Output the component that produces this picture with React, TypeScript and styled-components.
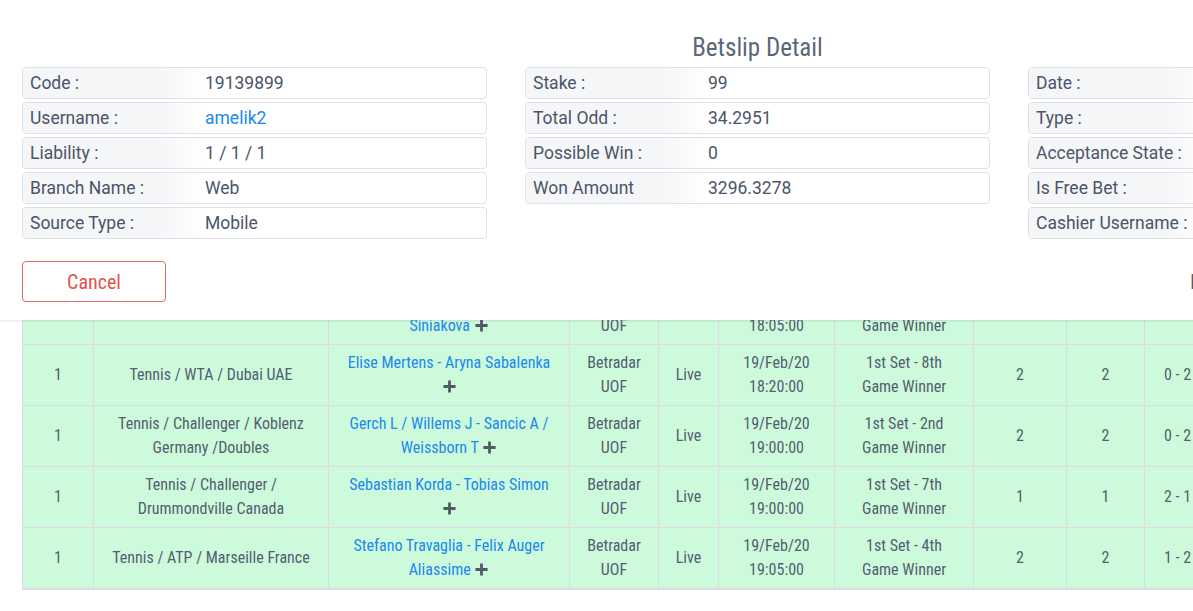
import { useLayoutEffect, useRef } from 'react';
import styled, { createGlobalStyle } from 'styled-components';

const colors = {
	text: '#535e71',
	label: '#4b5569',
	blue: '#2088ee',
	border: '#dfe1e7',
	cellBorder: '#dcdbe5',
	green: '#ccfadb',
	red: '#e2524b',
};

const condensed = `'Roboto Condensed', 'Liberation Sans Narrow', 'DejaVu Sans Condensed', Roboto, sans-serif`;

const GlobalStyle = createGlobalStyle`
	html, body {
		margin: 0;
		padding: 0;
		background: #fff;
	}
	body {
		font-family: Roboto, 'Liberation Sans', sans-serif;
	}
`;

type Field = { label: string; value?: string; link?: boolean };

const fieldColumns: Field[][] = [
	[
		{ label: 'Code :', value: '19139899' },
		{ label: 'Username :', value: 'amelik2', link: true },
		{ label: 'Liability :', value: '1 / 1 / 1' },
		{ label: 'Branch Name :', value: 'Web' },
		{ label: 'Source Type :', value: 'Mobile' },
	],
	[
		{ label: 'Stake :', value: '99' },
		{ label: 'Total Odd :', value: '34.2951' },
		{ label: 'Possible Win :', value: '0' },
		{ label: 'Won Amount', value: '3296.3278' },
	],
	[
		{ label: 'Date :', value: '19/Feb/20 17:58:41' },
		{ label: 'Type :', value: 'Multiple' },
		{ label: 'Acceptance State :', value: 'Accepted' },
		{ label: 'Is Free Bet :', value: 'No' },
		{ label: 'Cashier Username :', value: '-' },
	],
];

type Bet = {
	count: string;
	league: string;
	match: string;
	provider: string;
	state: string;
	date: string;
	time: string;
	market: string;
	odd: string;
	pick: string;
	score: string;
};

const bets: Bet[] = [
	{
		count: '1',
		league: 'Tennis / WTA / Dubai UAE',
		match: 'Barbora Krejcikova - Katerina Siniakova',
		provider: 'Betradar UOF',
		state: 'Live',
		date: '19/Feb/20',
		time: '18:05:00',
		market: '1st Set - 6th Game Winner',
		odd: '2',
		pick: '2',
		score: '1 - 2',
	},
	{
		count: '1',
		league: 'Tennis / WTA / Dubai UAE',
		match: 'Elise Mertens - Aryna Sabalenka',
		provider: 'Betradar UOF',
		state: 'Live',
		date: '19/Feb/20',
		time: '18:20:00',
		market: '1st Set - 8th Game Winner',
		odd: '2',
		pick: '2',
		score: '0 - 2',
	},
	{
		count: '1',
		league: 'Tennis / Challenger / Koblenz Germany /Doubles',
		match: 'Gerch L / Willems J - Sancic A / Weissborn T',
		provider: 'Betradar UOF',
		state: 'Live',
		date: '19/Feb/20',
		time: '19:00:00',
		market: '1st Set - 2nd Game Winner',
		odd: '2',
		pick: '2',
		score: '0 - 2',
	},
	{
		count: '1',
		league: 'Tennis / Challenger / Drummondville Canada',
		match: 'Sebastian Korda - Tobias Simon',
		provider: 'Betradar UOF',
		state: 'Live',
		date: '19/Feb/20',
		time: '19:00:00',
		market: '1st Set - 7th Game Winner',
		odd: '1',
		pick: '1',
		score: '2 - 1',
	},
	{
		count: '1',
		league: 'Tennis / ATP / Marseille France',
		match: 'Stefano Travaglia - Felix Auger Aliassime',
		provider: 'Betradar UOF',
		state: 'Live',
		date: '19/Feb/20',
		time: '19:05:00',
		market: '1st Set - 4th Game Winner',
		odd: '2',
		pick: '2',
		score: '1 - 2',
	},
];

const columnWidths = [71, 235, 241, 89, 60, 116, 139, 93, 78, 66, 110];

const PlusIcon = () => (
	<Plus viewBox="0 0 16 16" aria-hidden="true">
		<path d="M8 1.5v13M1.5 8h13" />
	</Plus>
);

const App = () => {
	const scrollRef = useRef<HTMLDivElement>(null);

	useLayoutEffect(() => {
		const el = scrollRef.current;
		if (el) el.scrollTop = el.scrollHeight - el.clientHeight;
	}, []);

	return (
		<>
			<GlobalStyle />
			<Page>
				<HeaderPanel>
					<Title>Betslip Detail</Title>
					<Fields>
						{fieldColumns.map((column, i) => (
							<FieldColumn key={i}>
								{column.map((f) => (
									<FieldRow key={f.label}>
										<FieldLabel>{f.label}</FieldLabel>
										<FieldValue $link={f.link}>{f.value}</FieldValue>
									</FieldRow>
								))}
							</FieldColumn>
						))}
					</Fields>
					<Actions>
						<CancelButton>Cancel</CancelButton>
						<ActionText>Is Cashed Out</ActionText>
					</Actions>
				</HeaderPanel>
				<BodyScroll ref={scrollRef}>
					<Table>
						<colgroup>
							{columnWidths.map((w, i) => (
								<col key={i} style={{ width: w }} />
							))}
						</colgroup>
						<tbody>
							{bets.map((b, i) => (
								<tr key={i}>
									<Cell>{b.count}</Cell>
									<Cell>{b.league}</Cell>
									<Cell>
										<MatchLink>{b.match}</MatchLink> <PlusIcon />
									</Cell>
									<Cell>{b.provider}</Cell>
									<Cell>{b.state}</Cell>
									<Cell>
										{b.date}
										<br />
										{b.time}
									</Cell>
									<Cell>{b.market}</Cell>
									<Cell>{b.odd}</Cell>
									<Cell>{b.pick}</Cell>
									<Cell $tight>{b.score}</Cell>
									<Cell>Lost</Cell>
								</tr>
							))}
						</tbody>
					</Table>
				</BodyScroll>
			</Page>
		</>
	);
};

const Page = styled.div`
	width: 100vw;
	height: 100vh;
	overflow: hidden;
	display: flex;
	flex-direction: column;
	background: #fff;
`;

const HeaderPanel = styled.div`
	flex: none;
	width: 1515px;
	box-sizing: border-box;
	padding: 32px 22px 18px;
	background: #fff;
	box-shadow: 0 1px 2px rgba(40, 50, 70, 0.12);
	position: relative;
	z-index: 2;
`;

const Title = styled.h2`
	margin: 0 0 3px;
	font-family: ${condensed};
	font-weight: 400;
	font-size: 25px;
	line-height: 32px;
	text-align: center;
	color: #5b6679;
`;

const Fields = styled.div`
	display: grid;
	grid-template-columns: repeat(3, 465px);
	justify-content: space-between;
	align-items: start;
`;

const FieldColumn = styled.div`
	display: flex;
	flex-direction: column;
	gap: 3px;
`;

const FieldRow = styled.div`
	display: flex;
	align-items: center;
	height: 32px;
	box-sizing: border-box;
	border: 1px solid ${colors.border};
	border-radius: 4px;
	overflow: hidden;
	font-size: 17.5px;
	white-space: nowrap;
`;

const FieldLabel = styled.div`
	flex: none;
	width: 182px;
	height: 100%;
	box-sizing: border-box;
	padding-left: 7px;
	display: flex;
	align-items: center;
	color: ${colors.label};
	background: linear-gradient(90deg, #f5f6f8 0%, #f5f6f8 75%, #ffffff 100%);
`;

const FieldValue = styled.div<{ $link?: boolean }>`
	color: ${(p) => (p.$link ? colors.blue : colors.label)};
`;

const Actions = styled.div`
	display: flex;
	align-items: center;
	justify-content: space-between;
	margin-top: 22px;
	padding-right: 193px;
`;

const CancelButton = styled.button`
	width: 144px;
	height: 41px;
	background: #fff;
	border: 1px solid #e06b65;
	border-radius: 4px;
	color: ${colors.red};
	font-family: ${condensed};
	font-size: 20px;
	cursor: pointer;
`;

const ActionText = styled.span`
	font-family: ${condensed};
	font-size: 20px;
	color: ${colors.text};
`;

const BodyScroll = styled.div`
	flex: 1;
	overflow: hidden;
	padding: 0 22px 21px;
`;

const Table = styled.table`
	table-layout: fixed;
	width: ${columnWidths.reduce((a, b) => a + b, 0)}px;
	border-collapse: collapse;
	background: ${colors.green};
	border-bottom: 2px solid #d9dce3;
`;

const Cell = styled.td<{ $tight?: boolean }>`
	height: 60px;
	box-sizing: border-box;
	padding: ${(p) => (p.$tight ? '6px 4px' : '6px 15px')};
	border: 1px solid ${colors.cellBorder};
	text-align: center;
	vertical-align: middle;
	white-space: ${(p) => (p.$tight ? 'nowrap' : 'normal')};
	font-family: ${condensed};
	font-size: 16px;
	line-height: 24px;
	color: ${colors.text};
`;

const MatchLink = styled.span`
	color: ${colors.blue};
	cursor: pointer;
`;

const Plus = styled.svg`
	display: inline-block;
	width: 15px;
	height: 15px;
	vertical-align: -2px;
	stroke: #525a68;
	stroke-width: 3;
	fill: none;
`;

export default App;
